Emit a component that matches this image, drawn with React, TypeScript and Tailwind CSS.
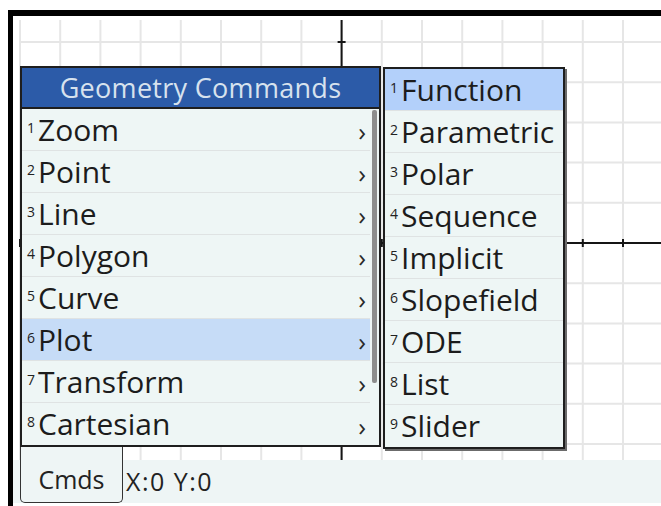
import React from 'react'

const mainItems = ['Zoom', 'Point', 'Line', 'Polygon', 'Curve', 'Plot', 'Transform', 'Cartesian']
const subItems = ['Function', 'Parametric', 'Polar', 'Sequence', 'Implicit', 'Slopefield', 'ODE', 'List', 'Slider']

// grid geometry in page pixels
const STEP = 40.2
const X0 = 20
const Y0 = 42
const AXIS_X = X0 + STEP * 8
const AXIS_Y = Y0 + STEP * 5

const PlotGrid = () => {
  const xs = Array.from({ length: 17 }, (_, i) => X0 + STEP * i)
  const ys = Array.from({ length: 11 }, (_, i) => Y0 + STEP * i)
  return (
    <svg className="absolute inset-0" width="661" height="506" viewBox="0 0 661 506">
      {xs.map((x) => (
        <line key={`v${x}`} x1={x} y1={20} x2={x} y2={460} stroke="#e6e6e6" strokeWidth="2" />
      ))}
      {ys.map((y) => (
        <line key={`h${y}`} x1={20} y1={y} x2={661} y2={y} stroke="#e6e6e6" strokeWidth="2" />
      ))}
      <line x1={AXIS_X} y1={20} x2={AXIS_X} y2={460} stroke="#151515" strokeWidth="2" />
      <line x1={20} y1={AXIS_Y} x2={661} y2={AXIS_Y} stroke="#151515" strokeWidth="2" />
      {xs.map((x) => (
        <line key={`tx${x}`} x1={x} y1={AXIS_Y - 4} x2={x} y2={AXIS_Y + 4} stroke="#151515" strokeWidth="2" />
      ))}
      {ys.map((y) => (
        <line key={`ty${y}`} x1={AXIS_X - 4} y1={y} x2={AXIS_X + 4} y2={y} stroke="#151515" strokeWidth="2" />
      ))}
    </svg>
  )
}

const Row = ({ n, label, active, activeClass, arrow }: { n: number; label: string; active: boolean; activeClass: string; arrow?: boolean }) => (
  <div className={`h-[42px] flex items-center border-b border-[#dfe3e3] last:border-b-0 ${active ? activeClass : ''}`}>
    <span className="w-[16px] pl-[5px] text-[14px] leading-none self-start mt-[12px] text-[#222]">{n}</span>
    <span className="text-[30px] leading-none text-[#1c1c1c]">{label}</span>
    {arrow && <span className="ml-auto mr-[4px] mt-[3px] text-[26px] leading-none text-[#2a2a2a]">›</span>}
  </div>
)

export default function App() {
  return (
    <div className="relative w-[661px] h-[506px] bg-white overflow-hidden font-['Open_Sans',sans-serif]">
      <PlotGrid />

      {/* screen frame */}
      <div className="absolute left-[8px] top-[10px] right-0 bottom-0 border-l-[5px] border-t-[6px] border-black flex flex-col">
        <div className="relative flex-1">
          {/* main menu */}
          <div className="absolute left-[7px] top-[50px] w-[361px] border-2 border-[#1e1e1e] bg-[#eef6f5]">
            <div className="h-[41px] bg-[#2c5ba8] border-b-2 border-[#1e1e1e] flex items-center justify-center text-[27px] leading-none tracking-[0.3px] text-[#d7e2ee]">
              Geometry Commands
            </div>
            <div className="flex">
              <div className="flex-1 flex flex-col">
                {mainItems.map((item, i) => (
                  <Row key={item} n={i + 1} label={item} active={i === 5} activeClass="bg-[#c6dcf7]" arrow />
                ))}
              </div>
              <div className="w-[9px] pt-[1px] pl-[2px]">
                <div className="w-[5px] h-[273px] rounded-[2px] bg-[#8d8d8d]" />
              </div>
            </div>
          </div>

          {/* submenu */}
          <div className="absolute left-[370px] top-[51px] w-[182px] border-2 border-[#1e1e1e] bg-[#eef6f5] shadow-[2px_2px_0_#6b6b6b]">
            {subItems.map((item, i) => (
              <Row key={item} n={i + 1} label={item} active={i === 0} activeClass="bg-[#b3d0fa]" />
            ))}
          </div>
        </div>

        {/* status bar */}
        <div className="h-[43px] bg-[#eef5f5] flex items-center">
          <div className="relative ml-[7px] -mt-[13px] h-[56px] w-[103px] bg-[#eef5f5] border-x-[1.5px] border-b-[1.5px] border-[#333] rounded-b-[5px] flex items-end justify-center pb-[10px] text-[25px] leading-none text-[#222]">
            Cmds
          </div>
          <span className="ml-[3px] text-[25px] leading-none tracking-[1.5px] text-[#222]">X:0 Y:0</span>
        </div>
        <div className="h-[3px] bg-white" />
      </div>
    </div>
  )
}
